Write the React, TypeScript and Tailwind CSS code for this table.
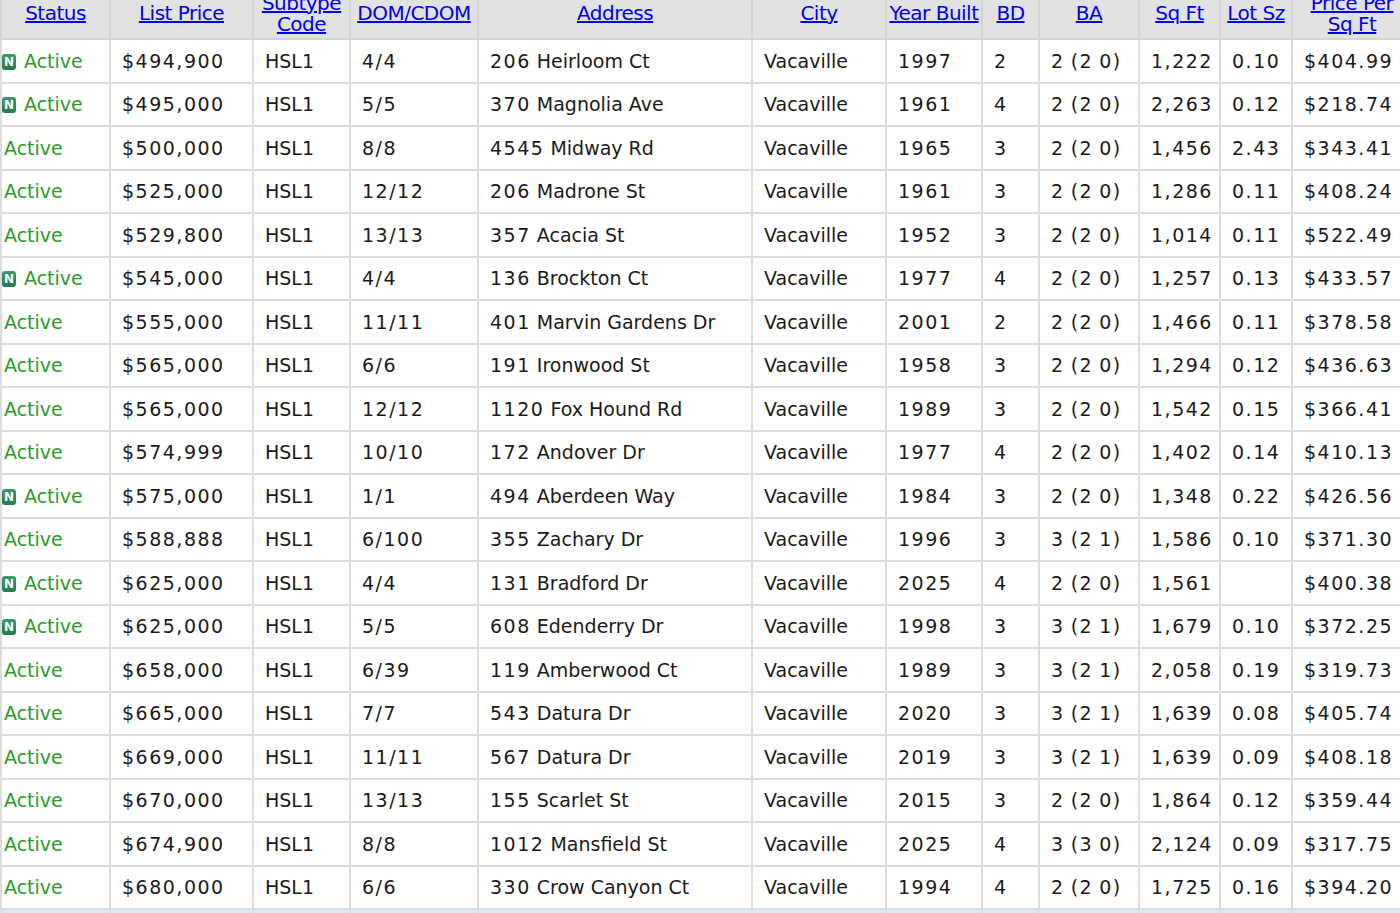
import React from "react";

type Listing = {
  isNew: boolean;
  price: string;
  dom: string;
  address: string;
  year: string;
  bd: string;
  ba: string;
  sqft: string;
  lot: string;
  ppsf: string;
};

const LISTINGS: Listing[] = [
  { isNew: true, price: "$494,900", dom: "4/4", address: "206 Heirloom Ct", year: "1997", bd: "2", ba: "2 (2 0)", sqft: "1,222", lot: "0.10", ppsf: "$404.99" },
  { isNew: true, price: "$495,000", dom: "5/5", address: "370 Magnolia Ave", year: "1961", bd: "4", ba: "2 (2 0)", sqft: "2,263", lot: "0.12", ppsf: "$218.74" },
  { isNew: false, price: "$500,000", dom: "8/8", address: "4545 Midway Rd", year: "1965", bd: "3", ba: "2 (2 0)", sqft: "1,456", lot: "2.43", ppsf: "$343.41" },
  { isNew: false, price: "$525,000", dom: "12/12", address: "206 Madrone St", year: "1961", bd: "3", ba: "2 (2 0)", sqft: "1,286", lot: "0.11", ppsf: "$408.24" },
  { isNew: false, price: "$529,800", dom: "13/13", address: "357 Acacia St", year: "1952", bd: "3", ba: "2 (2 0)", sqft: "1,014", lot: "0.11", ppsf: "$522.49" },
  { isNew: true, price: "$545,000", dom: "4/4", address: "136 Brockton Ct", year: "1977", bd: "4", ba: "2 (2 0)", sqft: "1,257", lot: "0.13", ppsf: "$433.57" },
  { isNew: false, price: "$555,000", dom: "11/11", address: "401 Marvin Gardens Dr", year: "2001", bd: "2", ba: "2 (2 0)", sqft: "1,466", lot: "0.11", ppsf: "$378.58" },
  { isNew: false, price: "$565,000", dom: "6/6", address: "191 Ironwood St", year: "1958", bd: "3", ba: "2 (2 0)", sqft: "1,294", lot: "0.12", ppsf: "$436.63" },
  { isNew: false, price: "$565,000", dom: "12/12", address: "1120 Fox Hound Rd", year: "1989", bd: "3", ba: "2 (2 0)", sqft: "1,542", lot: "0.15", ppsf: "$366.41" },
  { isNew: false, price: "$574,999", dom: "10/10", address: "172 Andover Dr", year: "1977", bd: "4", ba: "2 (2 0)", sqft: "1,402", lot: "0.14", ppsf: "$410.13" },
  { isNew: true, price: "$575,000", dom: "1/1", address: "494 Aberdeen Way", year: "1984", bd: "3", ba: "2 (2 0)", sqft: "1,348", lot: "0.22", ppsf: "$426.56" },
  { isNew: false, price: "$588,888", dom: "6/100", address: "355 Zachary Dr", year: "1996", bd: "3", ba: "3 (2 1)", sqft: "1,586", lot: "0.10", ppsf: "$371.30" },
  { isNew: true, price: "$625,000", dom: "4/4", address: "131 Bradford Dr", year: "2025", bd: "4", ba: "2 (2 0)", sqft: "1,561", lot: "", ppsf: "$400.38" },
  { isNew: true, price: "$625,000", dom: "5/5", address: "608 Edenderry Dr", year: "1998", bd: "3", ba: "3 (2 1)", sqft: "1,679", lot: "0.10", ppsf: "$372.25" },
  { isNew: false, price: "$658,000", dom: "6/39", address: "119 Amberwood Ct", year: "1989", bd: "3", ba: "3 (2 1)", sqft: "2,058", lot: "0.19", ppsf: "$319.73" },
  { isNew: false, price: "$665,000", dom: "7/7", address: "543 Datura Dr", year: "2020", bd: "3", ba: "3 (2 1)", sqft: "1,639", lot: "0.08", ppsf: "$405.74" },
  { isNew: false, price: "$669,000", dom: "11/11", address: "567 Datura Dr", year: "2019", bd: "3", ba: "3 (2 1)", sqft: "1,639", lot: "0.09", ppsf: "$408.18" },
  { isNew: false, price: "$670,000", dom: "13/13", address: "155 Scarlet St", year: "2015", bd: "3", ba: "2 (2 0)", sqft: "1,864", lot: "0.12", ppsf: "$359.44" },
  { isNew: false, price: "$674,900", dom: "8/8", address: "1012 Mansfield St", year: "2025", bd: "4", ba: "3 (3 0)", sqft: "2,124", lot: "0.09", ppsf: "$317.75" },
  { isNew: false, price: "$680,000", dom: "6/6", address: "330 Crow Canyon Ct", year: "1994", bd: "4", ba: "2 (2 0)", sqft: "1,725", lot: "0.16", ppsf: "$394.20" },
];

const HEADERS: { label: string[]; width: string }[] = [
  { label: ["Status"], width: "w-[109px]" },
  { label: ["List Price"], width: "w-[143px]" },
  { label: ["Subtype", "Code"], width: "w-[97px]" },
  { label: ["DOM/CDOM"], width: "w-[128px]" },
  { label: ["Address"], width: "w-[274px]" },
  { label: ["City"], width: "w-[134px]" },
  { label: ["Year Built"], width: "w-[96px]" },
  { label: ["BD"], width: "w-[57px]" },
  { label: ["BA"], width: "w-[100px]" },
  { label: ["Sq Ft"], width: "w-[81px]" },
  { label: ["Lot Sz"], width: "w-[72px]" },
  { label: ["Price Per", "Sq Ft"], width: "w-[120px]" },
];

function spaced(text: string) {
  return text.split(/([\d$,./()]+)/).map((part, i) =>
    /[\d]/.test(part) ? (
      <span key={i} className="tracking-[1.5px]">
        {part}
      </span>
    ) : (
      part
    )
  );
}

function NewBadge() {
  return (
    <span className="inline-flex items-center justify-center w-[14px] h-[16px] rounded-[3px] bg-gradient-to-b from-[#3a9a6c] to-[#237a4e] text-white text-[12px] font-bold leading-none align-[2px]">
      N
    </span>
  );
}

function Cell({ children }: { children: React.ReactNode }) {
  return (
    <td className="border-2 border-[#dcdcdc] pl-[11px] pr-1 whitespace-nowrap overflow-hidden">
      {children}
    </td>
  );
}

export default function App() {
  return (
    <div className="w-[1400px] h-[913px] overflow-hidden bg-white">
      <table
        className="table-fixed border-collapse -mt-[13px] text-[19px] text-[#1a1a1a]"
        style={{ fontFamily: '"DejaVu Sans", Verdana, sans-serif', width: 1411 }}
      >
        <colgroup>
          {HEADERS.map((h) => (
            <col key={h.label.join(" ")} className={h.width} />
          ))}
        </colgroup>
        <thead>
          <tr className="h-[51px] bg-[#e2e2e2]">
            {HEADERS.map((h) => (
              <th
                key={h.label.join(" ")}
                className="border-2 border-[#d4d4d4] font-normal text-center text-[20px] leading-[21px] px-0 whitespace-nowrap overflow-hidden tracking-[-0.5px]"
              >
                <a href="#" className="text-[#0000ee] underline">
                  {h.label.map((line) => (
                    <span key={line} className="block">
                      {line}
                    </span>
                  ))}
                </a>
              </th>
            ))}
          </tr>
        </thead>
        <tbody>
          {LISTINGS.map((l, i) => (
            <tr key={i} className="h-[43.5px]">
              <td className="border-2 border-[#dcdcdc] pl-0 whitespace-nowrap overflow-hidden">
                {l.isNew ? (
                  <>
                    <NewBadge />
                    <span className="ml-[8px] text-[#2b9a2b]">Active</span>
                  </>
                ) : (
                  <span className="ml-0.5 text-[#2b9a2b]">Active</span>
                )}
              </td>
              <Cell>{spaced(l.price)}</Cell>
              <Cell>{spaced("HSL1")}</Cell>
              <Cell>{spaced(l.dom)}</Cell>
              <Cell>{spaced(l.address)}</Cell>
              <Cell>Vacaville</Cell>
              <Cell>{spaced(l.year)}</Cell>
              <Cell>{spaced(l.bd)}</Cell>
              <Cell>{spaced(l.ba)}</Cell>
              <Cell>{spaced(l.sqft)}</Cell>
              <Cell>{spaced(l.lot)}</Cell>
              <Cell>{spaced(l.ppsf)}</Cell>
            </tr>
          ))}
          <tr className="h-[43.5px] bg-[#dde9f3]">
            {HEADERS.map((h) => (
              <td key={h.label.join(" ")} className="border-2 border-[#dcdcdc]" />
            ))}
          </tr>
        </tbody>
      </table>
    </div>
  );
}
